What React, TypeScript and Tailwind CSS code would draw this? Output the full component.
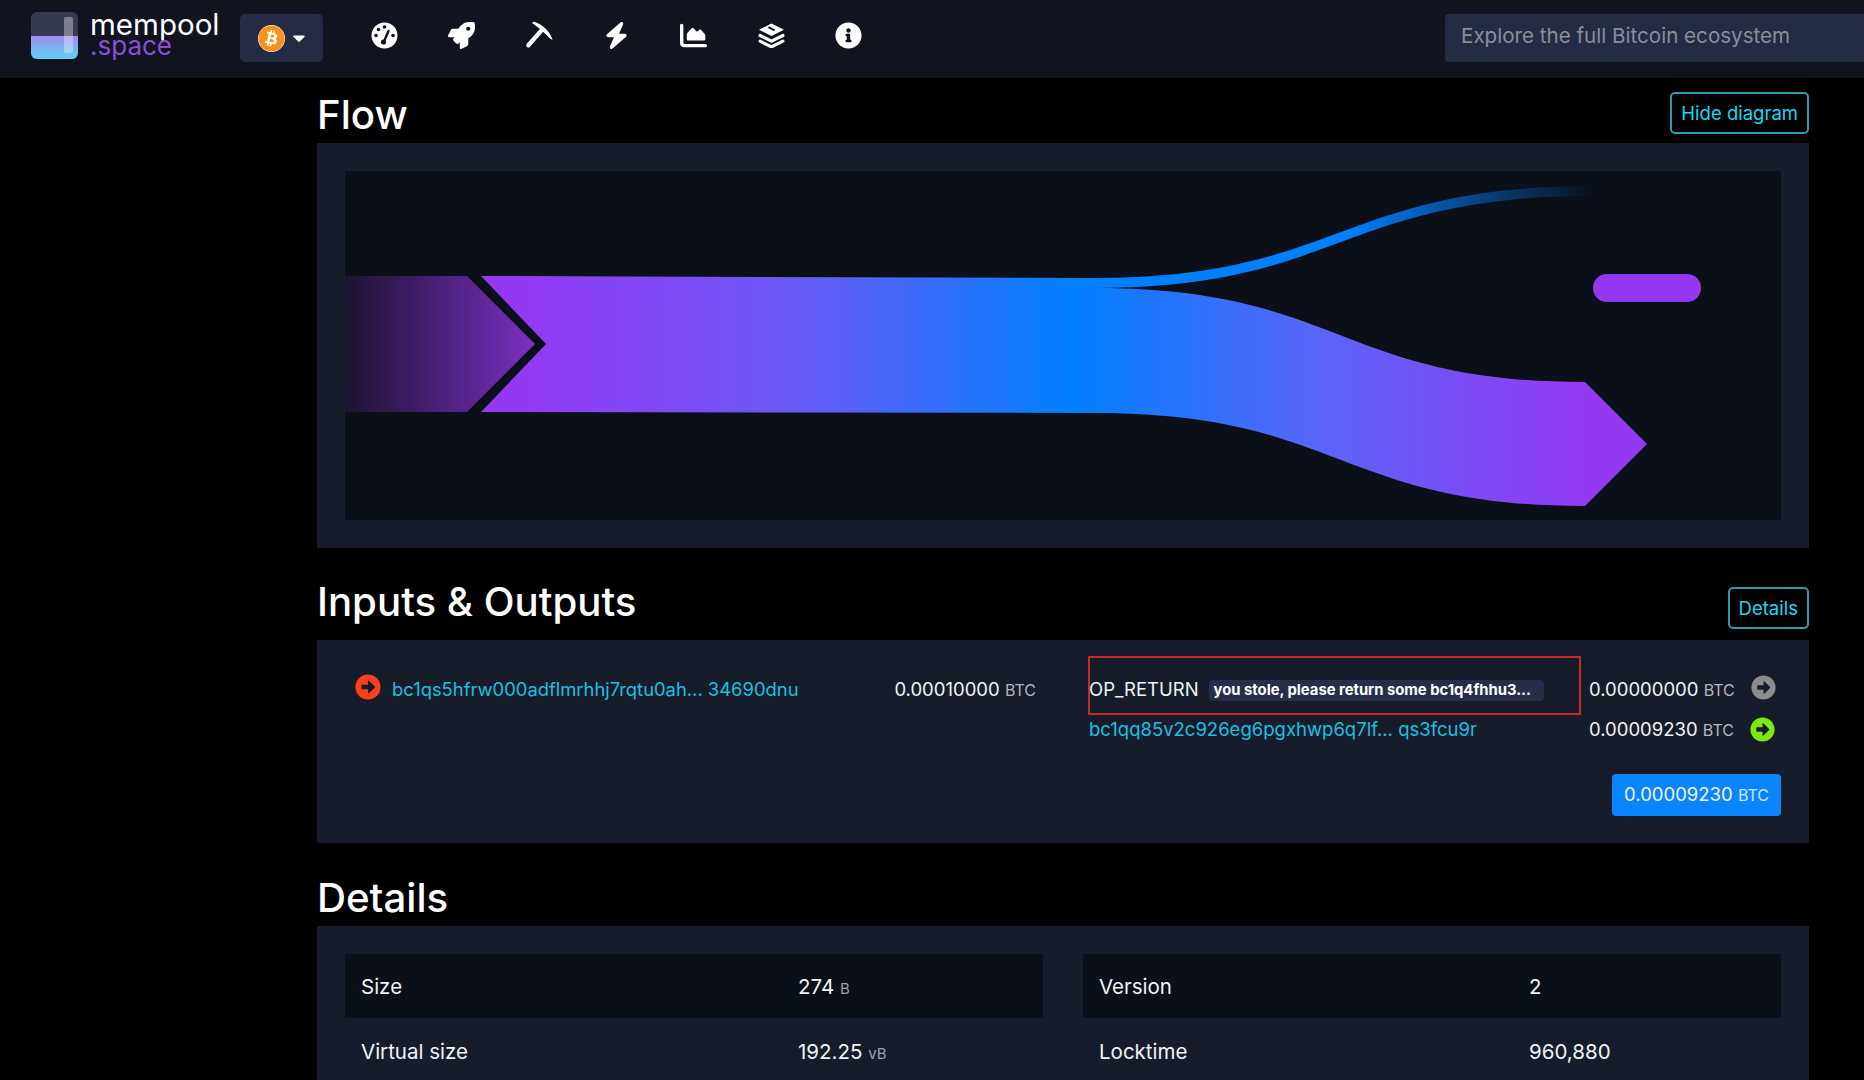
import { FaArrowAltCircleRight, FaBitcoin, FaCaretDown, FaInfoCircle, FaRocket } from 'react-icons/fa'
import { FaBolt, FaChartArea } from 'react-icons/fa6'

function Gauge() {
  return (
    <svg width="27" height="27" viewBox="0 0 27 27">
      <circle cx="13.5" cy="13.5" r="13" fill="#ffffff" />
      <circle cx="13.5" cy="5" r="1.8" fill="#11131f" />
      <circle cx="7.5" cy="7.5" r="1.8" fill="#11131f" />
      <circle cx="5" cy="13.5" r="1.8" fill="#11131f" />
      <circle cx="22" cy="13.5" r="1.8" fill="#11131f" />
      <path d="M12.5 20.5L17.5 9" stroke="#11131f" strokeWidth="2.4" strokeLinecap="round" />
      <circle cx="12.5" cy="20" r="2.6" fill="#11131f" />
    </svg>
  )
}

function Pick() {
  return (
    <svg width="28" height="28" viewBox="0 0 83 83">
      <path d="M20 5L28 2C52 10 74 30 82 56L74 52C60 36 40 20 20 5Z" fill="#ffffff" />
      <path d="M10 72L47 30" stroke="#ffffff" strokeWidth="13" strokeLinecap="round" />
    </svg>
  )
}

function Layers() {
  return (
    <svg width="27" height="25" viewBox="0 0 26 24">
      <path d="M13 0.5L25 6.5L13 12.5L1 6.5Z" fill="#ffffff" />
      <path d="M10 4L16 7" stroke="#11131f" strokeWidth="2" />
      <path d="M2 12L13 17.5L24 12" fill="none" stroke="#ffffff" strokeWidth="3" strokeLinecap="round" strokeLinejoin="round" />
      <path d="M2 17.5L13 23L24 17.5" fill="none" stroke="#ffffff" strokeWidth="3" strokeLinecap="round" strokeLinejoin="round" />
    </svg>
  )
}

const navIcons = [
  <Gauge />,
  <FaRocket className="text-[27px] text-white" />,
  <Pick />,
  <FaBolt className="text-[27px] text-white" />,
  <FaChartArea className="text-[27px] text-white" />,
  <Layers />,
  <FaInfoCircle className="text-[27px] text-white" />,
]

function Logo() {
  return (
    <svg width="47" height="47" viewBox="0 0 47 47" className="shrink-0">
      <defs>
        <linearGradient id="logoFill" x1="0" y1="0" x2="0" y2="1">
          <stop offset="0" stopColor="#9d8cf5" />
          <stop offset="1" stopColor="#5fd3ee" />
        </linearGradient>
      </defs>
      <rect width="47" height="47" rx="6" fill="#353a50" />
      <path d="M0 24h47v17a6 6 0 0 1-6 6H6a6 6 0 0 1-6-6z" fill="url(#logoFill)" />
      <rect x="33" y="5" width="9" height="36" rx="2" fill="#ffffff" fillOpacity="0.35" />
    </svg>
  )
}

function Flow() {
  return (
    <svg viewBox="0 0 1436 349" className="block w-full h-full">
      <defs>
        <linearGradient id="inGrad" gradientUnits="userSpaceOnUse" x1="0" y1="0" x2="190" y2="0">
          <stop offset="0" stopColor="#1b1330" />
          <stop offset="1" stopColor="#7a2fc4" />
        </linearGradient>
        <linearGradient id="mainGrad" gradientUnits="userSpaceOnUse" x1="180" y1="0" x2="1240" y2="0">
          <stop offset="0" stopColor="#9339f4" />
          <stop offset="0.257" stopColor="#6a5af7" />
          <stop offset="0.514" stopColor="#0080ff" />
          <stop offset="0.757" stopColor="#5d63f8" />
          <stop offset="1" stopColor="#9339f4" />
        </linearGradient>
        <linearGradient id="feeGrad" gradientUnits="userSpaceOnUse" x1="750" y1="0" x2="1250" y2="0">
          <stop offset="0" stopColor="#0080ff" />
          <stop offset="0.5" stopColor="#0080ff" />
          <stop offset="1" stopColor="#0080ff" stopOpacity="0" />
        </linearGradient>
      </defs>
      <path d="M0 105H122L190 173L122 241H0Z" fill="url(#inGrad)" />
      <path d="M136 105L750 107V117C995 117 995 211 1240 211L1302 273L1240 335C995 335 995 242 750 242L136 241L201 173Z" fill="url(#mainGrad)" />
      <path d="M750 107C995 107 995 15 1250 15V25C995 25 995 117 750 117Z" fill="url(#feeGrad)" />
      <rect x="1248" y="103" width="108" height="28" rx="14" fill="#9339f4" />
    </svg>
  )
}

function Amount({ value, dim = 'text-[#b3b5bb]' }: { value: string; dim?: string }) {
  return (
    <span className="text-[18.5px] text-[#f2f3f5] whitespace-nowrap">
      {value} <span className={`text-[16px] ${dim}`}>BTC</span>
    </span>
  )
}

function Heading({ title, action, rowClass, titleClass, actionClass }: { title: string; action?: string; rowClass: string; titleClass: string; actionClass?: string }) {
  return (
    <div className={`flex items-center justify-between ${rowClass}`}>
      <h2 className={`text-[40.2px] font-medium text-white leading-none ${titleClass}`}>{title}</h2>
      {action && (
        <button className={`h-[42px] px-[9px] pt-[1px] rounded-[5px] border-2 border-[#2b9cb0] text-[18.5px] text-[#1bd8f4] ${actionClass}`}>{action}</button>
      )}
    </div>
  )
}

function DetailRow({ label, value, unit, shaded, labelClass }: { label: string; value: string; unit?: string; shaded?: boolean; labelClass: string }) {
  return (
    <div className={`flex items-center px-[16px] pt-[2px] text-[20.5px] text-[#f2f3f5] ${shaded ? 'h-[64px] bg-[#0b0f17]' : 'h-[67px]'}`}>
      <span className={labelClass}>{label}</span>
      <span>
        {value} {unit && <span className="text-[15px] text-[#9ea1a8]">{unit}</span>}
      </span>
    </div>
  )
}

export default function App() {
  return (
    <div className="h-[1080px] overflow-hidden bg-black font-['Inter',sans-serif]">
      <header className="flex items-center h-[78px] bg-[#11131f]">
        <div className="flex items-center gap-[12px] ml-[31px] w-[209px] -mt-[7px]">
          <Logo />
          <div className="leading-[21px] -mt-[2px]">
            <div className="text-[29.5px] text-white">mempool</div>
            <div className="text-[26px] text-[#8a4fd8]">.space</div>
          </div>
        </div>
        <button className="flex items-center gap-[4px] w-[83px] h-[48px] pl-[18px] -mt-[2px] rounded-[5px] bg-[#232b45]">
          <span className="grid place-items-center w-[27px] h-[27px] rounded-full bg-white">
            <FaBitcoin className="text-[27px] text-[#f7931a]" />
          </span>
          <FaCaretDown className="text-[20px] text-white" />
        </button>
        <nav className="flex items-center ml-[23px] -mt-[8px]">
          {navIcons.map((icon, i) => (
            <div key={i} className="flex justify-center w-[77.3px]">{icon}</div>
          ))}
        </nav>
        <div className="flex items-center ml-auto w-[419px] h-[48px] -mt-[2px] pl-[16px] pb-[3px] rounded-l-[4px] bg-[#232b45] text-[20.6px] text-[#8b8e98]">
          Explore the full Bitcoin ecosystem
        </div>
      </header>

      <main className="pl-[317px] pr-[55px]">
        <Heading title="Flow" action="Hide diagram" rowClass="h-[65px]" titleClass="mt-[9px]" actionClass="mt-[5px]" />
        <section className="h-[405px] p-[28px] bg-[#171c2b]">
          <div className="h-full bg-[#0b0f17]">
            <Flow />
          </div>
        </section>

        <div className="mt-[22px]">
          <Heading title="Inputs & Outputs" action="Details" rowClass="h-[70px]" titleClass="mb-[5px]" actionClass="mt-[6px]" />
        </div>
        <section className="flex flex-col h-[203px] pl-[38px] pr-[28px] pt-[16px] bg-[#171c2b]">
          <div className="flex items-start">
            <div className="flex items-center w-[733px] h-[59px] pt-[8px]">
              <FaArrowAltCircleRight className="text-[26px] text-[#ff3f1a] shrink-0 -mt-[5px]" />
              <a className="ml-[11px] text-[18.4px] text-[#1cc0e0] whitespace-nowrap">bc1qs5hfrw000adflmrhhj7rqtu0ah... 34690dnu</a>
              <span className="ml-auto mr-[52px]">
                <Amount value="0.00010000" />
              </span>
            </div>
            <div className="flex items-center w-[493px] h-[59px] pt-[9px] border-2 border-[#c42b26]">
              <span className="-ml-[1px] text-[18.5px] text-[#f2f3f5]">OP_RETURN</span>
              <span className="ml-[10px] px-[5px] h-[21px] leading-[21px] rounded-[4px] bg-[#282e4a] text-[14.8px] font-bold text-white whitespace-nowrap w-[335px]">you stole, please return some bc1q4fhhu3...</span>
            </div>
            <div className="flex items-center ml-[8px] h-[59px] pt-[8px]">
              <Amount value="0.00000000" />
              <FaArrowAltCircleRight className="ml-[16px] text-[25px] text-[#8c8c8c] -mt-[5px]" />
            </div>
          </div>
          <div className="flex items-center h-[28px] pt-[1px]">
            <a className="ml-[734px] w-[500px] pt-[1px] text-[18.5px] text-[#1cc0e0] whitespace-nowrap">bc1qq85v2c926eg6pgxhwp6q7lf... qs3fcu9r</a>
            <Amount value="0.00009230" />
            <FaArrowAltCircleRight className="ml-[16px] text-[25px] text-[#7ee810]" />
          </div>
          <div className="flex justify-end mt-[31px]">
            <span className="flex items-center h-[42px] px-[12px] rounded-[4px] bg-[#0a84ff]">
              <Amount value="0.00009230" dim="text-[#cfe6ff]" />
            </span>
          </div>
        </section>

        <div className="mt-[18px]">
          <Heading title="Details" rowClass="h-[65px]" titleClass="mt-[10px]" />
        </div>
        <section className="grid grid-cols-2 gap-[40px] px-[28px] pt-[28px] pb-[20px] bg-[#171c2b]">
          <div>
            <DetailRow label="Size" value="274" unit="B" shaded labelClass="w-[437px]" />
            <DetailRow label="Virtual size" value="192.25" unit="vB" labelClass="w-[437px]" />
          </div>
          <div>
            <DetailRow label="Version" value="2" shaded labelClass="w-[430px]" />
            <DetailRow label="Locktime" value="960,880" labelClass="w-[430px]" />
          </div>
        </section>
      </main>
    </div>
  )
}
